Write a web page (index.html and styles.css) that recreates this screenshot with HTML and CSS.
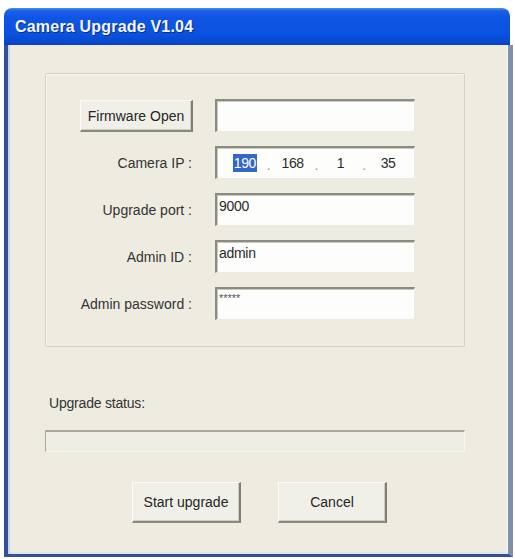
FILE: index.html
```html
<!DOCTYPE html>
<html>
<head>
<meta charset="utf-8">
<link rel="stylesheet" href="styles.css">
</head>
<body>
<div class="window">
  <div class="titlebar"><span class="title">Camera Upgrade V1.04</span></div>
  <div class="client">
    <div class="group">
      <div class="grid">
        <div class="btn btn-open">Firmware Open</div>
        <div class="field"></div>

        <div class="label">Camera IP :</div>
        <div class="field ip">
          <span class="oct"><span class="sel">190</span></span>
          <span class="dot">.</span>
          <span class="oct">168</span>
          <span class="dot">.</span>
          <span class="oct">1</span>
          <span class="dot">.</span>
          <span class="oct">35</span>
        </div>

        <div class="label">Upgrade port :</div>
        <div class="field"><span class="val">9000</span></div>

        <div class="label">Admin ID :</div>
        <div class="field"><span class="val">admin</span></div>

        <div class="label">Admin password :</div>
        <div class="field"><span class="val pw">*****</span></div>
      </div>
    </div>

    <div class="status-label">Upgrade status:</div>
    <div class="progress"></div>

    <div class="actions">
      <div class="btn btn-action">Start upgrade</div>
      <div class="btn btn-action">Cancel</div>
    </div>
  </div>
</div>
</body>
</html>
```

FILE: styles.css
```css
html, body {
  margin: 0;
  padding: 0;
  background: #ffffff;
}

body {
  font-family: "Liberation Sans", Arial, sans-serif;
  font-size: 14px;
  color: #2a2a2a;
}

.window {
  margin: 8px 0 0 4px;
  width: 509px;
  height: 549px;
  display: flex;
  flex-direction: column;
  box-sizing: border-box;
}

.titlebar {
  height: 37px;
  width: 506px;
  box-sizing: border-box;
  border-radius: 8px 8px 0 0;
  background: linear-gradient(to bottom, #4a8cf0 0px, #1c60e6 3px, #0d55e2 10px, #0a52df 26px, #0848d0 34px, #0a3fb8 37px);
  display: flex;
  align-items: center;
  padding-left: 11px;
}

.title {
  color: #f4f7ff;
  font-weight: bold;
  font-size: 16px;
  letter-spacing: 0.2px;
  text-shadow: 1px 1px 0 #0a2a8a;
}

.client {
  flex: 1;
  background: #eeece0;
  border-left: 4px solid #34509a;
  border-right: 5px solid #8090aa;
  border-bottom: 3px solid #33508f;
  box-shadow: inset 2px 0 0 #c9d3f2, inset 0 -2px 0 #dfe5f6, inset -1px 0 0 #f5f5f5;
  padding: 28px 43px 0 37px;
  display: flex;
  flex-direction: column;
}

.group {
  width: 420px;
  height: 274px;
  box-sizing: border-box;
  border: 1px solid #d3d1c3;
  box-shadow: inset 1px 1px 0 #f7f6f0;
  border-radius: 2px;
  padding: 25px 0 0 34px;
}

.grid {
  display: grid;
  grid-template-columns: 113px 200px;
  grid-auto-rows: 33px;
  column-gap: 22px;
  row-gap: 14px;
}

.label {
  display: flex;
  align-items: center;
  justify-content: flex-end;
  padding-right: 1px;
  color: #333333;
}

.btn {
  box-sizing: border-box;
  background: #f1f0e8;
  border-top: 1px solid #fbfbf8;
  border-left: 1px solid #fbfbf8;
  border-right: 2px solid #7e7e74;
  border-bottom: 2px solid #8a8a80;
  box-shadow: inset -1px -1px 0 #cfcdc0;
  display: flex;
  align-items: center;
  justify-content: center;
  color: #252525;
}

.btn-open {
  height: 32px;
  margin-top: 1px;
}

.field {
  box-sizing: border-box;
  background: #fdfdfb;
  border-top: 2px solid #8b8b82;
  border-left: 2px solid #8b8b82;
  border-right: 1px solid #ecebe3;
  border-bottom: 1px solid #ecebe3;
  box-shadow: inset 1px 1px 0 #c9c8be;
  padding: 3px 0 0 2px;
  color: #2a2a2a;
}

.val {
  display: block;
  line-height: 16px;
  letter-spacing: -0.3px;
}

.pw {
  font-size: 11px;
  line-height: 12px;
  color: #555;
  letter-spacing: 0;
}

.ip {
  display: flex;
  align-items: center;
  padding: 0 4px 0 6px;
}

.oct {
  flex: 1;
  text-align: center;
  letter-spacing: -0.4px;
}

.dot {
  width: 4px;
  text-align: center;
  color: #9a9a9a;
  margin-top: 4px;
}

.sel {
  background: #3468c8;
  color: #ffffff;
  padding: 1px 1px;
}

.status-label {
  margin-top: 48px;
  padding-left: 4px;
  line-height: 17px;
  color: #333333;
  letter-spacing: -0.2px;
}

.progress {
  margin-top: 18px;
  width: 420px;
  height: 22px;
  box-sizing: border-box;
  background: #efeee4;
  border-top: 2px solid #a9a89e;
  border-left: 1px solid #a9a89e;
  border-right: 1px solid #f7f7f2;
  border-bottom: 1px solid #f7f7f2;
}

.actions {
  margin-top: 30px;
  display: flex;
  justify-content: center;
  gap: 37px;
  margin-left: -37px;
  margin-right: -43px;
  padding-left: 3px;
}

.btn-action {
  width: 109px;
  height: 41px;
}
```
